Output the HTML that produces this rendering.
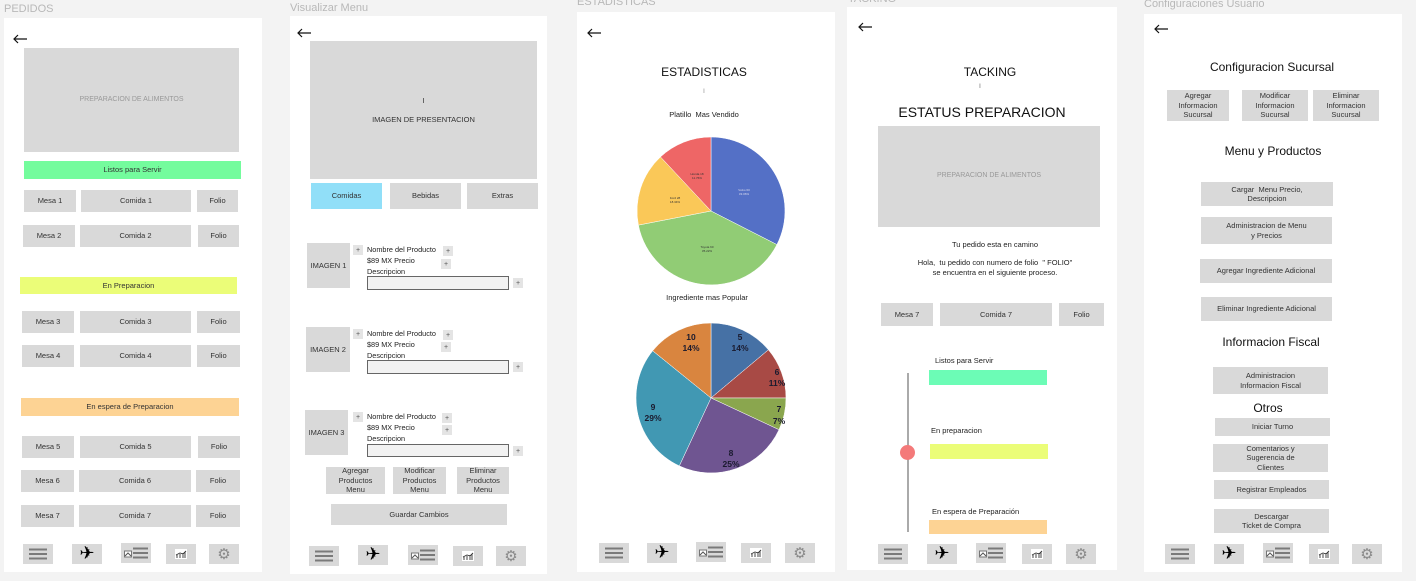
<!DOCTYPE html>
<html><head><meta charset="utf-8"><style>
*{margin:0;padding:0;box-sizing:border-box}
body{width:1416px;height:581px;background:#f3f3f3;position:relative;overflow:hidden;font-family:"Liberation Sans",sans-serif;color:#333}
.p{position:absolute;background:#fff}
.l{position:absolute;font-size:11px;color:#b8b8b8;white-space:nowrap}
.b{position:absolute;background:#d9d9d9;display:flex;align-items:center;justify-content:center;text-align:center;font-size:7.5px;color:#333;line-height:1.25}
.t{position:absolute;white-space:nowrap;color:#222}
.c{transform:translateX(-50%)}
.ar{position:absolute;width:14px;height:10px}
.n{position:absolute;background:#d9d9d9;width:30px;height:20px;display:flex;align-items:center;justify-content:center}
.pl{font-size:18px;color:#000;line-height:1;font-family:"DejaVu Sans",sans-serif}
.gr{font-size:15px;color:#8a8a8a;line-height:1;font-family:"DejaVu Sans",sans-serif}
.pb{position:absolute;width:10px;height:10px;background:#e4e4e4;font-size:7px;display:flex;align-items:center;justify-content:center;color:#555}
.in{position:absolute;border:1px solid #666;background:#f2f2f2}
.sm{font-size:7.3px}
</style></head><body>

<!-- Panel 1 -->
<div class="l" style="left:4px;top:3px">PEDIDOS</div>
<div class="p" style="left:4px;top:18px;width:258px;height:554px"></div>
<svg class="ar" style="left:13px;top:34px" viewBox="0 0 14 10"><path d="M1 5h13M5 1L1 5l4 4" stroke="#111" stroke-width="1.2" fill="none"/></svg>
<div class="b" style="left:24px;top:48px;width:215px;height:104px;color:#999;font-size:7px">PREPARACION DE ALIMENTOS</div>
<div class="b" style="left:24px;top:161px;width:217px;height:18px;background:#74fc9d">Listos para Servir</div>
<div class="b" style="left:24px;top:190px;width:52px;height:22px">Mesa 1</div>
<div class="b" style="left:81px;top:190px;width:110px;height:22px">Comida 1</div>
<div class="b" style="left:197px;top:190px;width:41px;height:22px">Folio</div>
<div class="b" style="left:23px;top:225px;width:52px;height:22px">Mesa 2</div>
<div class="b" style="left:80px;top:225px;width:111px;height:22px">Comida 2</div>
<div class="b" style="left:198px;top:225px;width:41px;height:22px">Folio</div>
<div class="b" style="left:20px;top:277px;width:217px;height:17px;background:#ebfd78">En Preparacion</div>
<div class="b" style="left:22px;top:311px;width:52px;height:22px">Mesa 3</div>
<div class="b" style="left:80px;top:311px;width:111px;height:22px">Comida 3</div>
<div class="b" style="left:197px;top:311px;width:43px;height:22px">Folio</div>
<div class="b" style="left:22px;top:345px;width:52px;height:22px">Mesa 4</div>
<div class="b" style="left:80px;top:345px;width:111px;height:22px">Comida 4</div>
<div class="b" style="left:197px;top:345px;width:43px;height:22px">Folio</div>
<div class="b" style="left:21px;top:398px;width:218px;height:18px;background:#fdd394">En espera de Preparacion</div>
<div class="b" style="left:22px;top:436px;width:52px;height:22px">Mesa 5</div>
<div class="b" style="left:80px;top:436px;width:111px;height:22px">Comida 5</div>
<div class="b" style="left:198px;top:436px;width:42px;height:22px">Folio</div>
<div class="b" style="left:21px;top:470px;width:53px;height:22px">Mesa 6</div>
<div class="b" style="left:79px;top:470px;width:112px;height:22px">Comida 6</div>
<div class="b" style="left:196px;top:470px;width:44px;height:22px">Folio</div>
<div class="b" style="left:21px;top:505px;width:53px;height:22px">Mesa 7</div>
<div class="b" style="left:79px;top:505px;width:112px;height:22px">Comida 7</div>
<div class="b" style="left:196px;top:505px;width:44px;height:22px">Folio</div>

<!-- Panel 2 -->
<div class="l" style="left:290px;top:2px">Visualizar Menu</div>
<div class="p" style="left:290px;top:16px;width:257px;height:558px"></div>
<svg class="ar" style="left:297px;top:28px" viewBox="0 0 14 10"><path d="M1 5h13M5 1L1 5l4 4" stroke="#111" stroke-width="1.2" fill="none"/></svg>
<div class="b" style="left:310px;top:41px;width:227px;height:138px;font-size:7.5px">I<br><br>IMAGEN DE PRESENTACION</div>
<div class="b" style="left:311px;top:183px;width:71px;height:26px;background:#91dff8">Comidas</div>
<div class="b" style="left:390px;top:183px;width:71px;height:26px">Bebidas</div>
<div class="b" style="left:467px;top:183px;width:71px;height:26px">Extras</div>

<div class="b" style="left:307px;top:243px;width:43px;height:45px">IMAGEN 1</div>
<div class="pb" style="left:353px;top:245px">+</div>
<div class="t sm" style="left:367px;top:245px">Nombre del Producto</div>
<div class="pb" style="left:443px;top:246px">+</div>
<div class="t sm" style="left:367px;top:256px">$89 MX Precio</div>
<div class="pb" style="left:441px;top:259px">+</div>
<div class="t sm" style="left:367px;top:267px">Descripcion</div>
<div class="in" style="left:367px;top:276px;width:142px;height:14px"></div>
<div class="pb" style="left:513px;top:278px">+</div>

<div class="b" style="left:306px;top:327px;width:44px;height:45px">IMAGEN 2</div>
<div class="pb" style="left:353px;top:329px">+</div>
<div class="t sm" style="left:367px;top:329px">Nombre del Producto</div>
<div class="pb" style="left:443px;top:330px">+</div>
<div class="t sm" style="left:367px;top:340px">$89 MX Precio</div>
<div class="pb" style="left:441px;top:342px">+</div>
<div class="t sm" style="left:367px;top:351px">Descripcion</div>
<div class="in" style="left:367px;top:360px;width:142px;height:14px"></div>
<div class="pb" style="left:513px;top:362px">+</div>

<div class="b" style="left:305px;top:410px;width:43px;height:45px">IMAGEN 3</div>
<div class="pb" style="left:353px;top:412px">+</div>
<div class="t sm" style="left:367px;top:412px">Nombre del Producto</div>
<div class="pb" style="left:442px;top:413px">+</div>
<div class="t sm" style="left:367px;top:423px">$89 MX Precio</div>
<div class="pb" style="left:442px;top:425px">+</div>
<div class="t sm" style="left:367px;top:434px">Descripcion</div>
<div class="in" style="left:367px;top:444px;width:142px;height:13px"></div>
<div class="pb" style="left:513px;top:446px">+</div>

<div class="b" style="left:326px;top:467px;width:59px;height:27px">Agregar<br>Productos<br>Menu</div>
<div class="b" style="left:393px;top:467px;width:53px;height:27px">Modificar<br>Productos<br>Menu</div>
<div class="b" style="left:457px;top:467px;width:52px;height:27px">Eliminar<br>Productos<br>Menu</div>
<div class="b" style="left:331px;top:504px;width:176px;height:21px">Guardar Cambios</div>

<!-- Panel 3 -->
<div class="l" style="left:577px;top:-4px">ESTADISTICAS</div>
<div class="p" style="left:577px;top:12px;width:258px;height:560px"></div>
<svg class="ar" style="left:587px;top:28px" viewBox="0 0 14 10"><path d="M1 5h13M5 1L1 5l4 4" stroke="#111" stroke-width="1.2" fill="none"/></svg>
<div class="t c" style="left:704px;top:65px;font-size:12px;color:#111">ESTADISTICAS</div>
<div class="t c" style="left:704px;top:89px;font-size:6px;color:#888">I</div>
<div class="t c" style="left:704px;top:110px;font-size:7.5px">Platillo&nbsp; Mas Vendido</div>
<div class="t c" style="left:707px;top:293px;font-size:7.5px">Ingrediente mas Popular</div>

<!-- Panel 4 -->
<div class="l" style="left:848px;top:-7px">TACKING</div>
<div class="p" style="left:847px;top:7px;width:270px;height:563px"></div>
<svg class="ar" style="left:858px;top:22px" viewBox="0 0 14 10"><path d="M1 5h13M5 1L1 5l4 4" stroke="#111" stroke-width="1.2" fill="none"/></svg>
<div class="t c" style="left:990px;top:65px;font-size:12px;color:#111">TACKING</div>
<div class="t c" style="left:980px;top:84px;font-size:6px;color:#666">I</div>
<div class="t c" style="left:982px;top:104px;font-size:14px;color:#111">ESTATUS PREPARACION</div>
<div class="b" style="left:878px;top:126px;width:222px;height:101px;color:#999;font-size:7px">PREPARACION DE ALIMENTOS</div>
<div class="t c" style="left:995px;top:240px;font-size:7.5px">Tu pedido esta en camino</div>
<div class="t c" style="left:995px;top:258px;font-size:7.5px;text-align:center;line-height:1.3">Hola,&nbsp; tu pedido con numero de folio&nbsp; " FOLIO"<br>se encuentra en el siguiente proceso.</div>
<div class="b" style="left:881px;top:303px;width:52px;height:23px">Mesa 7</div>
<div class="b" style="left:940px;top:303px;width:112px;height:23px">Comida 7</div>
<div class="b" style="left:1059px;top:303px;width:45px;height:23px">Folio</div>
<div style="position:absolute;left:907px;top:373px;width:2px;height:159px;background:#aaa"></div>
<div style="position:absolute;left:900px;top:445px;width:15px;height:15px;border-radius:50%;background:#f47a7a"></div>
<div class="t" style="left:935px;top:356px;font-size:7.5px">Listos para Servir</div>
<div style="position:absolute;left:929px;top:370px;width:118px;height:15px;background:#6cfcb6"></div>
<div class="t" style="left:931px;top:426px;font-size:7.5px">En preparacion</div>
<div style="position:absolute;left:930px;top:444px;width:118px;height:15px;background:#ebfd78"></div>
<div class="t" style="left:932px;top:507px;font-size:7.5px">En espera de Preparación</div>
<div style="position:absolute;left:929px;top:520px;width:118px;height:14px;background:#fdd394"></div>

<!-- Panel 5 -->
<div class="l" style="left:1144px;top:-2px">Configuraciones Usuario</div>
<div class="p" style="left:1144px;top:14px;width:258px;height:558px"></div>
<svg class="ar" style="left:1154px;top:24px" viewBox="0 0 14 10"><path d="M1 5h13M5 1L1 5l4 4" stroke="#111" stroke-width="1.2" fill="none"/></svg>
<div class="t c" style="left:1272px;top:60px;font-size:12px;color:#111">Configuracion Sucursal</div>
<div class="b" style="left:1167px;top:90px;width:62px;height:31px">Agregar<br>Informacion<br>Sucursal</div>
<div class="b" style="left:1242px;top:90px;width:66px;height:31px">Modificar<br>Informacion<br>Sucursal</div>
<div class="b" style="left:1313px;top:90px;width:66px;height:31px">Eliminar<br>Informacion<br>Sucursal</div>
<div class="t c" style="left:1273px;top:144px;font-size:12px;color:#111">Menu y Productos</div>
<div class="b" style="left:1201px;top:182px;width:132px;height:24px">Cargar&nbsp; Menu Precio,<br>Descripcion</div>
<div class="b" style="left:1201px;top:217px;width:131px;height:27px">Administracion de Menu<br>y Precios</div>
<div class="b" style="left:1200px;top:259px;width:132px;height:24px">Agregar Ingrediente Adicional</div>
<div class="b" style="left:1201px;top:297px;width:131px;height:24px">Eliminar Ingrediente Adicional</div>
<div class="t c" style="left:1271px;top:335px;font-size:12px;color:#111">Informacion Fiscal</div>
<div class="b" style="left:1213px;top:367px;width:115px;height:27px">Administracion<br>Informacion Fiscal</div>
<div class="t c" style="left:1268px;top:401px;font-size:12px;color:#111">Otros</div>
<div class="b" style="left:1215px;top:418px;width:115px;height:18px">Iniciar Turno</div>
<div class="b" style="left:1213px;top:444px;width:115px;height:28px">Comentarios y<br>Sugerencia de<br>Clientes</div>
<div class="b" style="left:1214px;top:480px;width:115px;height:19px">Registrar Empleados</div>
<div class="b" style="left:1214px;top:509px;width:115px;height:24px">Descargar<br>Ticket de Compra</div>

<!-- Pies -->
<svg width="1416" height="581" style="position:absolute;left:0;top:0" font-family="Liberation Sans, sans-serif">
<g stroke="#fff" stroke-width="0.5">
<path d="M711 211 L711 137 A74 74 0 0 1 776.9 244.6 Z" fill="#5470c6"/>
<path d="M711 211 L776.9 244.6 A74 74 0 0 1 638.4 225.1 Z" fill="#91cc75"/>
<path d="M711 211 L638.4 225.1 A74 74 0 0 1 660.5 156.9 Z" fill="#fac858"/>
<path d="M711 211 L660.5 156.9 A74 74 0 0 1 711 137 Z" fill="#ee6666"/>
</g>
<g font-size="3" text-anchor="middle">
<text x="744" y="191" fill="#dde">Volvo 60</text><text x="744" y="195" fill="#dde">33.06%</text>
<text x="707" y="248" fill="#333">Toyota 60</text><text x="707" y="252" fill="#333">35.22%</text>
<text x="675" y="199" fill="#333">Ford 28</text><text x="675" y="203" fill="#333">18.34%</text>
<text x="697" y="175" fill="#333">Honda 18</text><text x="697" y="179" fill="#333">11.76%</text>
</g>
<g stroke="#fff" stroke-width="0.5">
<path d="M711 398 L711 323 A75 75 0 0 1 768.4 349.8 Z" fill="#4671a5"/>
<path d="M711 398 L768.4 349.8 A75 75 0 0 1 786 398 Z" fill="#a84a45"/>
<path d="M711 398 L786 398 A75 75 0 0 1 779 429.7 Z" fill="#8aa64e"/>
<path d="M711 398 L779 429.7 A75 75 0 0 1 679.3 465.9 Z" fill="#6f5591"/>
<path d="M711 398 L679.3 465.9 A75 75 0 0 1 652.7 350.8 Z" fill="#4198b3"/>
<path d="M711 398 L652.7 350.8 A75 75 0 0 1 711 323 Z" fill="#d9853f"/>
</g>
<g font-size="8.5" font-weight="bold" text-anchor="middle" fill="#1a1a2e">
<text x="740" y="340">5</text><text x="740" y="351">14%</text>
<text x="777" y="375">6</text><text x="777" y="386">11%</text>
<text x="779" y="412">7</text><text x="779" y="424">7%</text>
<text x="731" y="456">8</text><text x="731" y="467">25%</text>
<text x="653" y="410">9</text><text x="653" y="421">29%</text>
<text x="691" y="340">10</text><text x="691" y="351">14%</text>
</g>
</svg>

<!-- Navs -->
<div class="n" style="left:23px;top:544px"><svg width="18" height="12"><path d="M0 1.5h18M0 6h18M0 10.5h18" stroke="#7a7a7a" stroke-width="2"/></svg></div>
<div class="n" style="left:72px;top:544px"><span class="pl">✈</span></div>
<div class="n" style="left:121px;top:543px"><svg width="24" height="12"><rect x="0.5" y="4" width="7" height="6" fill="#fff" stroke="#777"/><path d="M1 9l3-3 3 3" stroke="#555" fill="none"/><path d="M9 1.5h15M9 6h15M9 10.5h15" stroke="#7a7a7a" stroke-width="2"/></svg></div>
<div class="n" style="left:166px;top:544px"><svg width="12" height="10"><rect width="12" height="10" fill="#fff"/><path d="M2 9V6M5 9V5M8 9V4M10 9V3M1 6l4-2 3 1 3-3" stroke="#333" stroke-width="0.9" fill="none"/></svg></div>
<div class="n" style="left:209px;top:544px"><span class="gr">⚙</span></div>

<div class="n" style="left:309px;top:546px"><svg width="18" height="12"><path d="M0 1.5h18M0 6h18M0 10.5h18" stroke="#7a7a7a" stroke-width="2"/></svg></div>
<div class="n" style="left:358px;top:545px"><span class="pl">✈</span></div>
<div class="n" style="left:408px;top:545px"><svg width="24" height="12"><rect x="0.5" y="4" width="7" height="6" fill="#fff" stroke="#777"/><path d="M1 9l3-3 3 3" stroke="#555" fill="none"/><path d="M9 1.5h15M9 6h15M9 10.5h15" stroke="#7a7a7a" stroke-width="2"/></svg></div>
<div class="n" style="left:453px;top:546px"><svg width="12" height="10"><rect width="12" height="10" fill="#fff"/><path d="M2 9V6M5 9V5M8 9V4M10 9V3M1 6l4-2 3 1 3-3" stroke="#333" stroke-width="0.9" fill="none"/></svg></div>
<div class="n" style="left:496px;top:546px"><span class="gr">⚙</span></div>

<div class="n" style="left:599px;top:543px"><svg width="18" height="12"><path d="M0 1.5h18M0 6h18M0 10.5h18" stroke="#7a7a7a" stroke-width="2"/></svg></div>
<div class="n" style="left:647px;top:543px"><span class="pl">✈</span></div>
<div class="n" style="left:696px;top:542px"><svg width="24" height="12"><rect x="0.5" y="4" width="7" height="6" fill="#fff" stroke="#777"/><path d="M1 9l3-3 3 3" stroke="#555" fill="none"/><path d="M9 1.5h15M9 6h15M9 10.5h15" stroke="#7a7a7a" stroke-width="2"/></svg></div>
<div class="n" style="left:741px;top:543px"><svg width="12" height="10"><rect width="12" height="10" fill="#fff"/><path d="M2 9V6M5 9V5M8 9V4M10 9V3M1 6l4-2 3 1 3-3" stroke="#333" stroke-width="0.9" fill="none"/></svg></div>
<div class="n" style="left:785px;top:543px"><span class="gr">⚙</span></div>

<div class="n" style="left:878px;top:544px"><svg width="18" height="12"><path d="M0 1.5h18M0 6h18M0 10.5h18" stroke="#7a7a7a" stroke-width="2"/></svg></div>
<div class="n" style="left:927px;top:544px"><span class="pl">✈</span></div>
<div class="n" style="left:976px;top:543px"><svg width="24" height="12"><rect x="0.5" y="4" width="7" height="6" fill="#fff" stroke="#777"/><path d="M1 9l3-3 3 3" stroke="#555" fill="none"/><path d="M9 1.5h15M9 6h15M9 10.5h15" stroke="#7a7a7a" stroke-width="2"/></svg></div>
<div class="n" style="left:1022px;top:544px"><svg width="12" height="10"><rect width="12" height="10" fill="#fff"/><path d="M2 9V6M5 9V5M8 9V4M10 9V3M1 6l4-2 3 1 3-3" stroke="#333" stroke-width="0.9" fill="none"/></svg></div>
<div class="n" style="left:1066px;top:544px"><span class="gr">⚙</span></div>

<div class="n" style="left:1165px;top:544px"><svg width="18" height="12"><path d="M0 1.5h18M0 6h18M0 10.5h18" stroke="#7a7a7a" stroke-width="2"/></svg></div>
<div class="n" style="left:1214px;top:544px"><span class="pl">✈</span></div>
<div class="n" style="left:1263px;top:543px"><svg width="24" height="12"><rect x="0.5" y="4" width="7" height="6" fill="#fff" stroke="#777"/><path d="M1 9l3-3 3 3" stroke="#555" fill="none"/><path d="M9 1.5h15M9 6h15M9 10.5h15" stroke="#7a7a7a" stroke-width="2"/></svg></div>
<div class="n" style="left:1309px;top:544px"><svg width="12" height="10"><rect width="12" height="10" fill="#fff"/><path d="M2 9V6M5 9V5M8 9V4M10 9V3M1 6l4-2 3 1 3-3" stroke="#333" stroke-width="0.9" fill="none"/></svg></div>
<div class="n" style="left:1352px;top:544px"><span class="gr">⚙</span></div>
</body></html>
